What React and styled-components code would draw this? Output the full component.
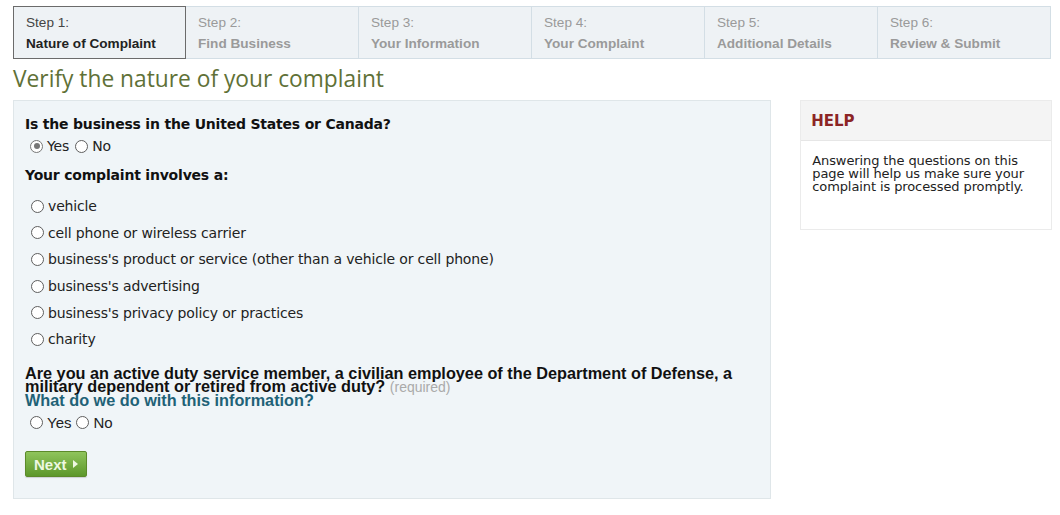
import React from "react";
import styled, { createGlobalStyle } from "styled-components";

const Global = createGlobalStyle`
  html, body { margin: 0; padding: 0; background: #ffffff; }
  body { font-family: "DejaVu Sans", Verdana, sans-serif; color: #111; }
`;

const Page = styled.div`
  width: 1060px;
  height: 515px;
  padding: 6px 8px 0 13px;
  box-sizing: border-box;
  overflow: hidden;
`;

const Steps = styled.div`
  display: grid;
  grid-template-columns: repeat(6, 173px);
  width: 1039px;
  height: 53px;
`;

const Step = styled.div`
  box-sizing: border-box;
  padding: 6px 0 0 12px;
  background: #eef2f5;
  border: 1px solid ${(p) => (p.$active ? "#6b6b6b" : "#d3dee5")};
  border-left-width: ${(p) => (p.$first || p.$active ? "1px" : "0")};
  font-family: "Liberation Sans", Arial, sans-serif;
  font-size: 13.6px;
  line-height: 20px;
`;

const StepNum = styled.div`
  color: ${(p) => (p.$active ? "#444" : "#9a9a9a")};
  font-weight: normal;
`;

const StepName = styled.div`
  color: ${(p) => (p.$active ? "#222" : "#9a9a9a")};
  font-weight: bold;
  margin-top: 1px;
`;

const Title = styled.h1`
  margin: 5px 0 0 0;
  height: 36px;
  font-family: "Open Sans", sans-serif;
  font-weight: normal;
  font-size: 22.75px;
  line-height: 30px;
  color: #5f7137;
`;

const Body = styled.div`
  display: flex;
  align-items: flex-start;
  gap: 29px;
`;

const Panel = styled.div`
  width: 759px;
  height: 399px;
  box-sizing: border-box;
  background: #f0f5f8;
  border: 1px solid #dfe6e9;
  padding: 15px 11px 0 11px;
`;

const Question = styled.div`
  font-weight: bold;
  font-size: 14px;
  line-height: 17px;
  color: #111;
  letter-spacing: -0.2px;
  margin-top: ${(p) => p.$mt || 0}px;
`;

const Row = styled.div`
  display: flex;
  align-items: center;
  gap: ${(p) => p.$gap || 6}px;
  padding-left: ${(p) => p.$indent || 5}px;
  height: ${(p) => p.$h || 22}px;
  margin-top: ${(p) => p.$mt || 0}px;
`;

const Choice = styled.label`
  display: flex;
  align-items: center;
  gap: 4px;
  color: #222;
  font-family: ${(p) => (p.$narrow ? '"Liberation Sans Narrow", "Liberation Sans", sans-serif' : '"DejaVu Sans", Verdana, sans-serif')};
  font-size: ${(p) => (p.$narrow ? 15 : 14)}px;
  letter-spacing: ${(p) => (p.$narrow ? 0 : -0.15)}px;
`;

const Dot = styled.span`
  display: inline-block;
  flex: none;
  width: 13px;
  height: 13px;
  box-sizing: border-box;
  border-radius: 50%;
  border: 1px solid #5e5e5e;
  background: #fff;
  position: relative;
  ${(p) =>
    p.$on &&
    `border-color:#777;
     &::after{content:"";position:absolute;left:2.5px;top:2.5px;width:6px;height:6px;border-radius:50%;background:#777;}`}
`;

const OptionList = styled.div`
  display: flex;
  flex-direction: column;
  margin-top: 9px;
`;

const Option = styled.div`
  height: 26.6px;
  display: flex;
  align-items: center;
  padding-left: 6px;
`;

const Military = styled.div`
  margin-top: 14px;
  font-family: "Liberation Sans Narrow", "Liberation Sans", sans-serif;
  font-weight: bold;
  font-size: 16.25px;
  line-height: 13.5px;
  color: #111;
`;

const Req = styled.span`
  font-weight: normal;
  color: #aaa;
  font-size: 14px;
  line-height: 0;
`;

const Info = styled.a`
  display: block;
  color: #1f6277;
  text-decoration: none;
`;

const NextButton = styled.button`
  margin-top: 17px;
  display: flex;
  align-items: center;
  gap: 6px;
  height: 26px;
  padding: 0 8px 0 8px;
  border: 1px solid #5c8a2a;
  border-radius: 2px;
  background: linear-gradient(#8fc45c, #5d982b);
  color: #eef8e2;
  font-family: "Liberation Sans Narrow", "Liberation Sans", sans-serif;
  font-weight: bold;
  font-size: 15px;
  box-shadow: 0 1px 1px rgba(0,0,0,0.15);
`;

const Help = styled.div`
  width: 252px;
  height: 130px;
  box-sizing: border-box;
  border: 1px solid #ebebeb;
  background: #fff;
`;

const HelpHead = styled.div`
  height: 40px;
  box-sizing: border-box;
  padding: 11px 10px 0 10px;
  background: #f4f4f4;
  border-bottom: 1px solid #e6e6e6;
  color: #8c2525;
  font-weight: bold;
  font-size: 15px;
`;

const HelpText = styled.div`
  padding: 13px 10px 0 11px;
  font-size: 13px;
  line-height: 13px;
  color: #222;
  letter-spacing: -0.1px;
`;

const steps = [
  ["Step 1:", "Nature of Complaint"],
  ["Step 2:", "Find Business"],
  ["Step 3:", "Your Information"],
  ["Step 4:", "Your Complaint"],
  ["Step 5:", "Additional Details"],
  ["Step 6:", "Review & Submit"],
];

const options = [
  "vehicle",
  "cell phone or wireless carrier",
  "business's product or service (other than a vehicle or cell phone)",
  "business's advertising",
  "business's privacy policy or practices",
  "charity",
];

export default function App() {
  return (
    <>
      <Global />
      <Page>
        <Steps>
          {steps.map(([n, name], i) => (
            <Step key={n} $active={i === 0} $first={i === 0}>
              <StepNum $active={i === 0}>{n}</StepNum>
              <StepName $active={i === 0}>{name}</StepName>
            </Step>
          ))}
        </Steps>
        <Title>Verify the nature of your complaint</Title>
        <Body>
          <Panel>
            <Question>Is the business in the United States or Canada?</Question>
            <Row $indent={5} $mt={2}>
              <Choice><Dot $on />Yes</Choice>
              <Choice><Dot />No</Choice>
            </Row>
            <Question $mt={10}>Your complaint involves a:</Question>
            <OptionList>
              {options.map((o) => (
                <Option key={o}>
                  <Choice><Dot />{o}</Choice>
                </Option>
              ))}
            </OptionList>
            <Military>
              Are you an active duty service member, a civilian employee of the Department of Defense, a military dependent or retired from active duty? <Req>(required)</Req>
              <Info href="#">What do we do with this information?</Info>
            </Military>
            <Row $indent={5} $h={24} $gap={5} $mt={3}>
              <Choice $narrow><Dot />Yes</Choice>
              <Choice $narrow><Dot />No</Choice>
            </Row>
            <NextButton>
              Next
              <svg width="5" height="8" viewBox="0 0 5 8"><path d="M0 0 L5 4 L0 8 Z" fill="#eef8e2" /></svg>
            </NextButton>
          </Panel>
          <Help>
            <HelpHead>HELP</HelpHead>
            <HelpText>
              Answering the questions on this page will help us make sure your complaint is processed promptly.
            </HelpText>
          </Help>
        </Body>
      </Page>
    </>
  );
}
